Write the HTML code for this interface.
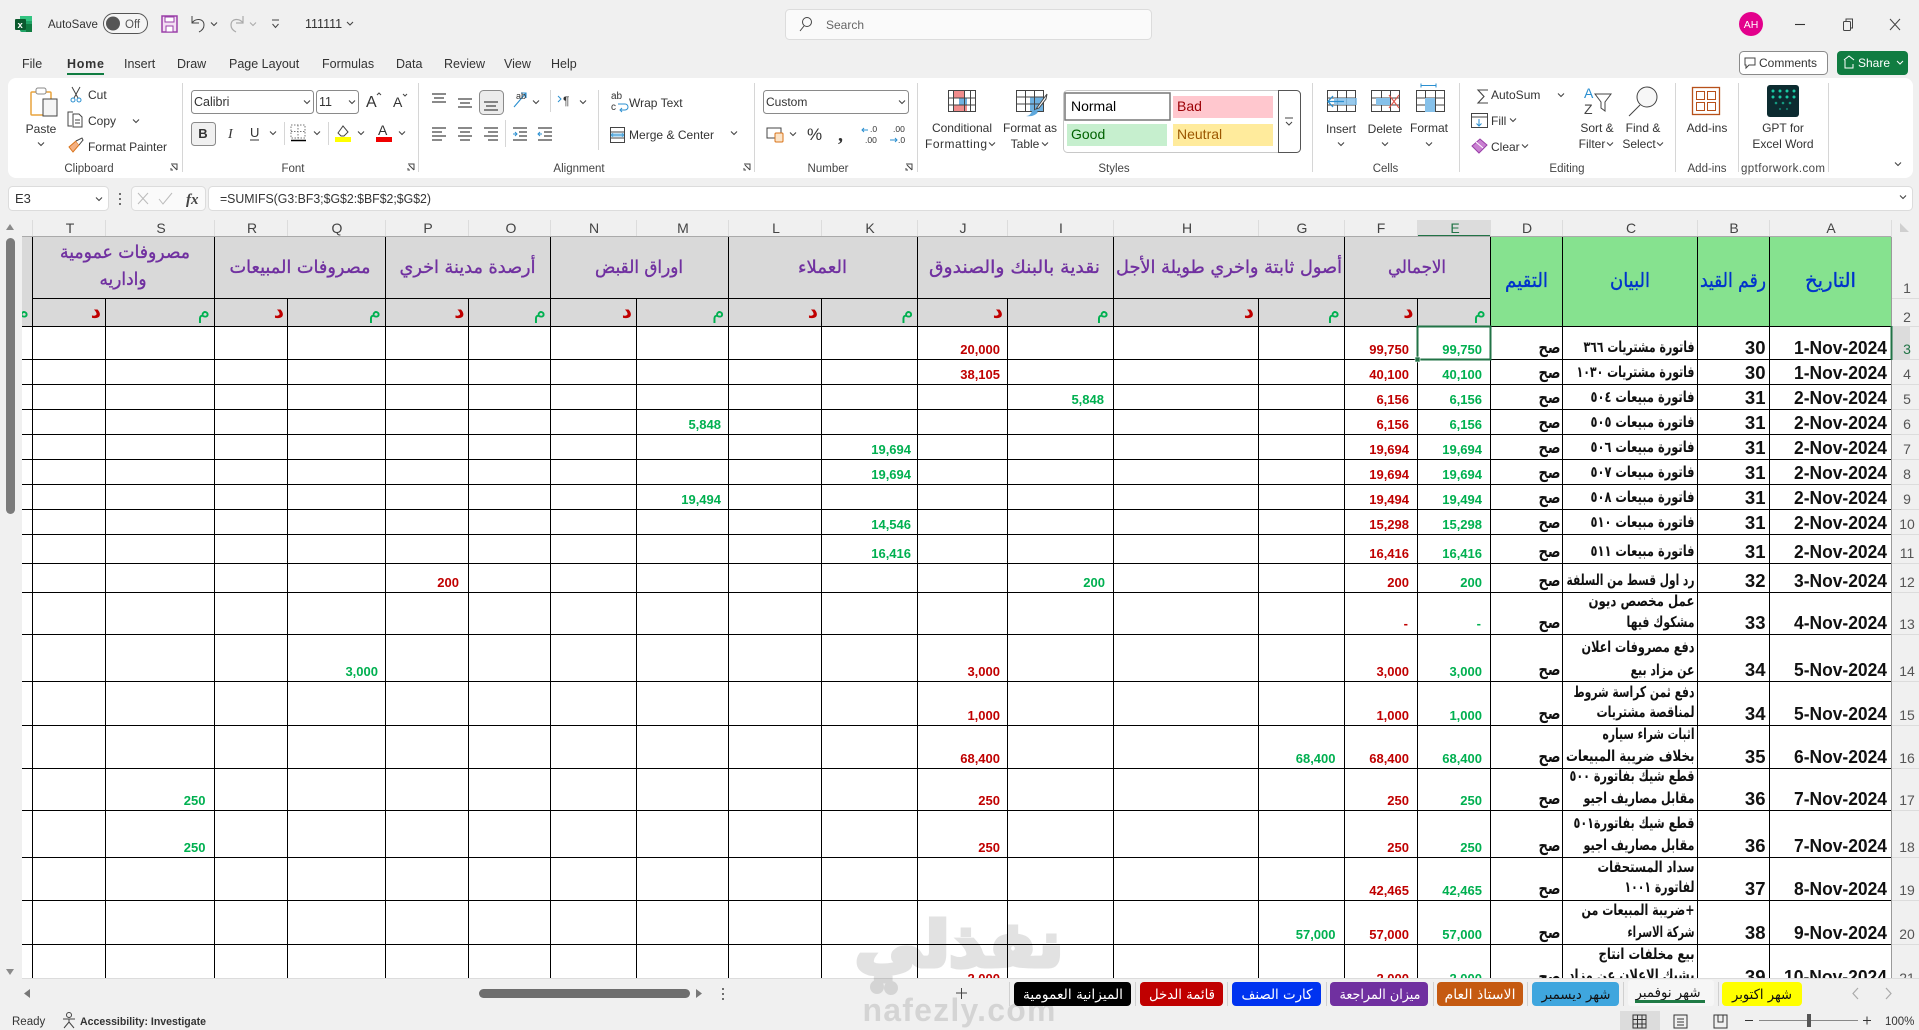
<!DOCTYPE html>
<html><head><meta charset="utf-8"><title>111111 - Excel</title>
<style>
html,body{margin:0;padding:0;background:#f0f0f0;overflow:hidden;width:1919px;height:1030px}
svg{display:block;position:absolute;left:0;top:0}
text{font-family:"Liberation Sans",sans-serif;font-size:12px;fill:#333}
.m{text-anchor:middle}
.tb{font-size:12px;fill:#333}
.g{font-size:11.5px;fill:#444;text-anchor:middle}
.ch{font-size:14px;fill:#444;text-anchor:middle}
.rh{font-size:14px;fill:#555;text-anchor:middle}
.r{font-size:13px;font-weight:bold;fill:#c00000;text-anchor:end}
.e{font-size:13px;font-weight:bold;fill:#00b050;text-anchor:end}
.d{font-size:18.5px;font-weight:bold;fill:#111;text-anchor:end}
.c{font-family:"DejaVu Sans",sans-serif;font-size:15px;font-weight:bold;fill:#111;direction:rtl;text-anchor:start}
.h{font-family:"DejaVu Sans",sans-serif;font-size:18px;fill:#7030a0;stroke:#7030a0;stroke-width:.35;text-anchor:middle}
.b{font-family:"DejaVu Sans",sans-serif;font-size:20px;fill:#0033cc;stroke:#0033cc;stroke-width:.35;text-anchor:middle}
.sm{font-family:"DejaVu Sans",sans-serif;font-size:20px;fill:#00b050;direction:rtl;text-anchor:start}
.sd{font-family:"DejaVu Sans",sans-serif;font-size:20px;fill:#c00000;font-weight:bold;direction:rtl;text-anchor:start}
.tab{font-family:"DejaVu Sans",sans-serif;font-size:14px;fill:#fff;text-anchor:middle}
.ic{fill:none;stroke:#444;stroke-width:1}
.cv{fill:none;stroke:#444;stroke-width:1.1}
</style></head>
<body>
<svg width="1919" height="1030" viewBox="0 0 1919 1030" xmlns="http://www.w3.org/2000/svg">
<defs>
<path id="cv" class="cv" d="M-3 -1.5L0 1.5L3 -1.5"/>
<clipPath id="sheet"><rect x="22" y="237" width="1897" height="741"/></clipPath>
</defs>
<rect width="1919" height="1030" fill="#f0f0f0"/>

<!-- title bar -->
<rect x="20" y="16" width="12" height="16" rx="2" fill="#21a366"/>
<rect x="20" y="16" width="12" height="5" fill="#33c481"/>
<rect x="26" y="24" width="6" height="8" fill="#107c41"/>
<rect x="15" y="19" width="11" height="11" rx="1" fill="#0b5a2e"/>
<text x="17.5" y="28" style="font-size:9.5px;font-weight:bold;fill:#fff">x</text>
<text x="48" y="28" style="font-size:11.5px">AutoSave</text>
<rect x="103.500" y="13.500" width="44" height="20" rx="10" fill="#f5f5f5" stroke="#555"/>
<circle cx="113" cy="23.500" r="7" fill="#555"/>
<text x="125" y="28" style="font-size:11.500px;fill:#555">Off</text>
<rect x="162" y="16" width="15" height="16" fill="#f3dff3" stroke="#9a3fa8" stroke-width="1.500"/>
<rect x="165" y="17" width="9" height="5" fill="#fff" stroke="#9a3fa8"/>
<rect x="166" y="26" width="7" height="6" fill="#fff" stroke="#9a3fa8"/>
<path d="M192 16v7h7M192 23c3-5 12-5 12 2 0 4-3 6-5 7" class="ic" stroke-width="1.200"/>
<use href="#cv" x="214" y="24"/>
<path d="M243 16v7h-7M243 23c-3-5-12-5-12 2 0 4 3 6 5 7" fill="none" stroke="#aaa" stroke-width="1.200"/>
<path d="M250 22.500l3 3 3-3" fill="none" stroke="#aaa"/>
<path d="M272 20h7M272.500 24l3 3.500 3-3.500" class="ic"/>
<text x="305" y="28" style="font-size:12.500px">111111</text>
<use href="#cv" x="350" y="23.500"/>
<rect x="785.500" y="9.500" width="366" height="30" rx="4" fill="#fafafa" stroke="#dcdcdc"/>
<circle cx="807" cy="22" r="4.500" class="ic"/><path d="M804 26l-4 5" class="ic"/>
<text x="826" y="29" style="font-size:12px;fill:#666">Search</text>
<circle cx="1751" cy="24" r="12" fill="#e3008c"/>
<text x="1751" y="28" class="m" style="font-size:10.500px;fill:#fff">AH</text>
<path d="M1795 24.500h10" stroke="#333" stroke-width="1.100"/>
<rect x="1843.500" y="21.500" width="7" height="9" rx="1" class="ic"/><path d="M1846 21v-2h6.500v9h-2" class="ic"/>
<path d="M1890 19l10 11M1900 19l-10 11" class="ic" stroke-width="1.100"/>

<!-- menu -->
<g>
<text x="22" y="68" style="font-size:12.500px">File</text>
<text x="67" y="68" style="font-weight:bold;fill:#333;font-size:12.500px" textLength="37">Home</text>
<text x="124" y="68" style="font-size:12.500px">Insert</text>
<text x="177" y="68" style="font-size:12.500px">Draw</text>
<text x="229" y="68" style="font-size:12.500px">Page Layout</text>
<text x="322" y="68" style="font-size:12.500px">Formulas</text>
<text x="396" y="68" style="font-size:12.500px">Data</text>
<text x="444" y="68" style="font-size:12.500px">Review</text>
<text x="504" y="68" style="font-size:12.500px">View</text>
<text x="551" y="68" style="font-size:12.500px">Help</text>
</g>
<rect x="67" y="73" width="37" height="2" fill="#107c41"/>
<rect x="1739.500" y="51.500" width="88" height="23" rx="4" fill="#fff" stroke="#8a8a8a"/>
<path d="M1745 58h10v7h-6l-3 3v-3h-1z" class="ic"/>
<text x="1759" y="67" style="font-size:12px">Comments</text>
<rect x="1837" y="51" width="71" height="24" rx="4" fill="#107c41"/>
<path d="M1844 60l5-4 5 4M1845 60v8h8v-4" fill="none" stroke="#fff"/>
<text x="1858" y="67" style="font-size:12px;fill:#fff">Share</text>
<path d="M1897 61l3 3 3-3" fill="none" stroke="#fff"/>

<!-- ribbon -->
<rect x="8" y="78" width="1905" height="100" rx="8" fill="#fff"/>
<g stroke="#d6d6d6">
<path d="M182.500 83v89M418.500 83v89M754.500 83v89M917.500 83v89M1312.500 83v89M1459.500 83v89M1675.500 83v89M1738.500 83v89M1828.500 83v89M284.500 122v23M328.500 122v23M505.500 120v27M550.500 90v22M598.500 90v60"/>
</g>
<text x="89" y="172" class="g">Clipboard</text>
<text x="293" y="172" class="g">Font</text>
<text x="579" y="172" class="g">Alignment</text>
<text x="828" y="172" class="g">Number</text>
<text x="1114" y="172" class="g">Styles</text>
<text x="1385.500" y="172" class="g">Cells</text>
<text x="1567" y="172" class="g">Editing</text>
<text x="1707" y="172" class="g">Add-ins</text>
<text x="1783" y="172" class="g" textLength="84">gptforwork.com</text>
<path d="M171 164h6v6M177 170l-5-5M171 168v2h2" class="ic" stroke-width=".8"/>
<path d="M408 164h6v6M414 170l-5-5M408 168v2h2" class="ic" stroke-width=".8"/>
<path d="M744 164h6v6M750 170l-5-5M744 168v2h2" class="ic" stroke-width=".8"/>
<path d="M906 164h6v6M912 170l-5-5M906 168v2h2" class="ic" stroke-width=".8"/>
<use href="#cv" x="1898" y="164"/>

<!-- clipboard -->
<rect x="31" y="92" width="20" height="23" rx="1" fill="#fff" stroke="#e8a33d" stroke-width="1.500"/>
<rect x="36" y="88" width="10" height="6" rx="2" fill="#fff" stroke="#888"/>
<rect x="43" y="99" width="14" height="17" fill="#f5f5f5" stroke="#444"/>
<text x="41" y="133" class="tb m">Paste</text>
<use href="#cv" x="41" y="144"/>
<path d="M72 87l6 11M80 87l-6 11" class="ic"/>
<circle cx="73" cy="100" r="2" fill="none" stroke="#2a8fd0"/><circle cx="79" cy="100" r="2" fill="none" stroke="#2a8fd0"/>
<text x="88" y="99" class="tb">Cut</text>
<path d="M72 126h-4v-14h5M73 114h6l3 3v10h-9z" class="ic"/>
<path d="M75 120h5M75 123h5" class="ic" stroke-width=".8"/>
<text x="88" y="125" class="tb">Copy</text>
<use href="#cv" x="136" y="121"/>
<path d="M69 147l7-6 3 4-6 7z" fill="#f4b183" stroke="#d9731a"/>
<path d="M76 141l6-3 1 2-4 5" fill="#fff" stroke="#444"/>
<text x="88" y="151" class="tb" textLength="79">Format Painter</text>

<!-- font -->
<rect x="191.500" y="90.500" width="122" height="23" rx="3" fill="#fff" stroke="#8a8a8a"/>
<text x="194" y="106" class="tb" style="font-size:12.500px">Calibri</text>
<use href="#cv" x="307" y="102"/>
<rect x="316.500" y="90.500" width="42" height="23" rx="3" fill="#fff" stroke="#8a8a8a"/>
<text x="319" y="106" class="tb" style="font-size:12.500px">11</text>
<use href="#cv" x="352" y="102"/>
<text x="366" y="107" style="font-size:16px">A</text><path d="M377 95l2-2 2 2" class="ic" stroke-width=".8"/>
<text x="393" y="107" style="font-size:14px">A</text><path d="M403 94l2 2 2-2" class="ic" stroke-width=".8"/>
<rect x="191.500" y="122.500" width="24" height="23" rx="3" fill="#f0f0f0" stroke="#8a8a8a"/>
<text x="203" y="138" class="m" style="font-size:13px;font-weight:bold">B</text>
<text x="228" y="138" style="font-family:'Liberation Serif',serif;font-style:italic;font-size:14px">I</text>
<text x="250" y="137" style="font-size:13px">U</text><path d="M250 140h9" stroke="#333"/>
<use href="#cv" x="273" y="133"/>
<rect x="291" y="125" width="14" height="13" fill="none" stroke="#777" stroke-dasharray="1.500 1.500"/><path d="M298 125v13M291 131.500h14" stroke="#777" stroke-dasharray="1.500 1.500"/>
<path d="M291 140.500h15" stroke="#000" stroke-width="1.500"/>
<use href="#cv" x="317" y="133"/>
<path d="M338 133l5-7 5 6-4 4h-3z" fill="#fff" stroke="#444"/>
<rect x="335" y="137" width="16" height="5" fill="#ffff00"/>
<use href="#cv" x="361" y="133"/>
<text x="378" y="135" style="font-size:14px">A</text>
<rect x="376" y="137" width="16" height="5" fill="#f00000"/>
<use href="#cv" x="402" y="133"/>

<!-- align -->
<g fill="none" stroke="#444" stroke-width="1.200">
<path d="M432 94h14M434 98h10M432 102h14"/>
<path d="M458 99h14M460 103h10M458 107h14"/>
<rect x="479.500" y="90.500" width="24" height="24" rx="4" fill="#ececec" stroke="#8a8a8a" stroke-width="1"/>
<path d="M484 102h14M486 106h10M484 110h14"/>
<path d="M432 128h14M432 132h10M432 136h14M432 140h10"/>
<path d="M458 128h14M460 132h10M458 136h14M460 140h10"/>
<path d="M484 128h14M488 132h10M484 136h14M488 140h10"/>
<path d="M513 128h14M519 132h8M519 136h8M513 140h14"/>
<path d="M538 128h14M544 132h8M544 136h8M538 140h14"/>
</g>
<path d="M513 134h4M515 132l2 2-2 2" fill="none" stroke="#2a8fd0"/>
<path d="M542 134h-4M540 132l-2 2 2 2" fill="none" stroke="#2a8fd0"/>
<path d="M514 107l12-14M521 93h5v5" fill="none" stroke="#2a8fd0" stroke-width="1.100"/>
<text x="516" y="99" style="font-size:9px">ab</text>
<use href="#cv" x="536" y="102"/>
<path d="M558 96l3 3-3 3" fill="none" stroke="#2a8fd0"/>
<text x="563" y="105" style="font-size:12px">¶</text>
<use href="#cv" x="583" y="102"/>
<text x="611" y="99" style="font-size:10px">ab</text>
<text x="611" y="110" style="font-size:10px">c</text>
<path d="M618 104h7a3 3 0 0 1 0 6h-4M622 108l-2 2 2 2" fill="none" stroke="#2a8fd0"/>
<text x="629" y="107" class="tb">Wrap Text</text>
<rect x="610.500" y="127.500" width="14" height="15" fill="#fff" stroke="#444"/>
<path d="M610 132h15M610 138h15" stroke="#444"/>
<rect x="611" y="133" width="13" height="4" fill="#bde0f5"/>
<path d="M613 135h9M613 133.500l-1.500 1.500 1.500 1.500M622 133.500l1.500 1.500-1.500 1.500" fill="none" stroke="#2a8fd0"/>
<text x="629" y="139" class="tb" textLength="85">Merge &amp; Center</text>
<use href="#cv" x="734" y="133"/>

<!-- number -->
<rect x="763.500" y="90.500" width="145" height="23" rx="3" fill="#fff" stroke="#8a8a8a"/>
<text x="766" y="106" class="tb">Custom</text>
<use href="#cv" x="902" y="102"/>
<rect x="767" y="128" width="14" height="10" fill="#fff" stroke="#444"/>
<rect x="775" y="133" width="8" height="9" rx="1" fill="#fce4c8" stroke="#d9731a"/>
<use href="#cv" x="793" y="134"/>
<text x="807" y="140" style="font-size:17px">%</text>
<text x="838" y="141" style="font-size:20px;font-weight:bold;font-family:'Liberation Serif',serif">,</text>
<text x="870" y="132" style="font-size:8.500px">.0</text>
<path d="M868 130h-6m2-2l-2 2 2 2" fill="none" stroke="#2a8fd0"/>
<text x="865" y="143" style="font-size:8.500px">.00</text>
<text x="893" y="132" style="font-size:8.500px">.00</text>
<path d="M890 140h7m-2-2l2 2-2 2" fill="none" stroke="#2a8fd0"/>
<text x="898" y="143" style="font-size:8.500px">.0</text>

<!-- cond formatting -->
<rect x="953" y="91" width="11" height="7" fill="#f08c8c"/>
<rect x="959" y="98" width="8" height="7" fill="#6fb1e0"/>
<rect x="953" y="105" width="14" height="7" fill="#f08c8c"/>
<g fill="none" stroke="#444" stroke-width="1">
<rect x="948.500" y="90.500" width="27" height="21"/>
<path d="M948 98h28M948 105h28M953.500 90v22M964.500 90v22M970.500 90v22"/>
</g>
<text x="962" y="132" class="tb m">Conditional</text>
<text x="956" y="148" class="tb m" textLength="62">Formatting</text>
<use href="#cv" x="992" y="144"/>
<rect x="1030" y="97" width="14" height="15" fill="#6fb1e0"/>
<g fill="none" stroke="#444" stroke-width="1">
<rect x="1016.500" y="90.500" width="27" height="21"/>
<path d="M1016 97h28M1016 104h28M1025.500 90v22M1034.500 90v22"/>
</g>
<path d="M1036 109l8-11 3-4-1 5-7 9z" fill="#fff" stroke="#444"/>
<path d="M1026 116c3 0 5-2 6-5 2-2 5 0 6 1-2 3-6 5-12 4z" fill="#5ea8dc"/>
<text x="1030" y="132" class="tb m">Format as</text>
<text x="1025" y="148" class="tb m">Table</text>
<use href="#cv" x="1045" y="144"/>

<!-- styles -->
<rect x="1063.500" y="90.500" width="237" height="62" rx="4" fill="#fff" stroke="#c8c8c8"/>
<rect x="1065" y="93" width="105" height="27" fill="#fff" stroke="#777" stroke-width="1.500"/>
<text x="1071" y="111" style="font-size:14px;fill:#000">Normal</text>
<rect x="1173" y="96" width="100" height="22" fill="#ffc7ce"/>
<text x="1177" y="111" style="font-size:14px;fill:#9c0006">Bad</text>
<rect x="1067" y="124" width="100" height="22" fill="#c6efce"/>
<text x="1071" y="139" style="font-size:14px;fill:#006100">Good</text>
<rect x="1173" y="124" width="100" height="22" fill="#ffeb9c"/>
<text x="1177" y="139" style="font-size:14px;fill:#9c5700">Neutral</text>
<path d="M1278.500 90.500h18a4 4 0 0 1 4 4v54a4 4 0 0 1-4 4h-18z" fill="#fff" stroke="#555"/>
<path d="M1285 118h8M1286 122l3 3 3-3" class="ic"/>

<!-- cells -->
<g fill="none" stroke="#444">
<rect x="1327.500" y="90.500" width="28" height="21"/>
<path d="M1327 98h29M1327 105h29M1337.500 90v22M1346.500 90v22"/>
<rect x="1371.500" y="90.500" width="28" height="21"/>
<path d="M1371 98h29M1371 105h29M1381.500 90v22M1390.500 90v22"/>
<rect x="1416.500" y="90.500" width="28" height="21"/>
<path d="M1416 98h29M1416 105h29M1425.500 90v22M1435.500 90v22"/>
</g>
<rect x="1334" y="98" width="23" height="7" fill="#86c1ea" opacity=".85"/>
<path d="M1344 101.500h-16M1333 96l-5 5.500 5 5.500" fill="none" stroke="#2a8fd0" stroke-width="1.300"/>
<rect x="1376" y="98" width="14" height="7" fill="#86c1ea"/>
<path d="M1389 95l10 13M1399 95l-10 13" fill="none" stroke="#e0564a" stroke-width="1.100"/>
<rect x="1425" y="98" width="10" height="14" fill="#86c1ea"/>
<path d="M1421 85.500h15M1421 83.500v4M1436 83.500v4" fill="none" stroke="#2a8fd0"/>
<text x="1341" y="133" class="tb m">Insert</text>
<use href="#cv" x="1341" y="144"/>
<text x="1385" y="133" class="tb m">Delete</text>
<use href="#cv" x="1385" y="144"/>
<text x="1429" y="132" class="tb m">Format</text>
<use href="#cv" x="1429" y="144"/>

<!-- editing -->
<path d="M1488 90h-10l6 6.500-6 6.500h10" fill="none" stroke="#444" stroke-width="1.100"/>
<text x="1491" y="99" class="tb">AutoSum</text>
<use href="#cv" x="1561" y="95"/>
<rect x="1471.500" y="113.500" width="16" height="14" fill="#fff" stroke="#444"/><path d="M1471 117h17" stroke="#444"/>
<path d="M1479 119v7M1476.500 123.500l2.500 2.500 2.500-2.500" fill="none" stroke="#2a8fd0"/>
<text x="1491" y="125" class="tb">Fill</text>
<use href="#cv" x="1513" y="120"/>
<path d="M1472 146l8-7 7 6-8 8z" fill="#c97fd1" stroke="#9a3fa8"/><path d="M1476 142l7 6" stroke="#fff"/>
<text x="1491" y="151" class="tb">Clear</text>
<use href="#cv" x="1525" y="146"/>
<text x="1584" y="98" style="font-size:14px;fill:#2a8fd0">A</text>
<text x="1584" y="114" style="font-size:14px;fill:#444">Z</text>
<path d="M1595 94h16l-6 8v9l-4-3v-6z" class="ic"/>
<text x="1597" y="132" class="tb m">Sort &amp;</text>
<text x="1592" y="148" class="tb m">Filter</text>
<use href="#cv" x="1610" y="144"/>
<circle cx="1647" cy="97" r="10" fill="#f7f7f7" stroke="#444"/><path d="M1640 105l-11 11" class="ic"/>
<text x="1643" y="132" class="tb m">Find &amp;</text>
<text x="1639" y="148" class="tb m">Select</text>
<use href="#cv" x="1660" y="144"/>

<!-- add-ins -->
<rect x="1692.500" y="87.500" width="27" height="27" fill="#fff" stroke="#b7501a" stroke-width="1.300"/>
<rect x="1696.500" y="91.500" width="8" height="8" fill="none" stroke="#b7501a"/>
<rect x="1707.500" y="91.500" width="8" height="8" fill="none" stroke="#b7501a"/>
<rect x="1696.500" y="102.500" width="8" height="8" fill="none" stroke="#b7501a"/>
<rect x="1707.500" y="102.500" width="8" height="8" fill="none" stroke="#b7501a"/>
<text x="1707" y="132" class="tb m">Add-ins</text>
<rect x="1767" y="85" width="32" height="32" rx="3" fill="#0c2b30"/>
<g fill="#19c9a3">
<circle cx="1773" cy="91" r="1.500"/><circle cx="1780" cy="91" r="1.500"/><circle cx="1787" cy="91" r="1.500"/><circle cx="1794" cy="91" r="1.500"/>
<circle cx="1773" cy="97" r="1.500"/><circle cx="1780" cy="97" r="1.500"/><circle cx="1787" cy="97" r="1.500"/><circle cx="1794" cy="97" r="1.500"/>
<circle cx="1776" cy="103" r="1.300" opacity=".7"/><circle cx="1783" cy="103" r="1.300" opacity=".7"/><circle cx="1790" cy="103" r="1.300" opacity=".7"/>
<circle cx="1780" cy="109" r="1.100" opacity=".5"/><circle cx="1787" cy="109" r="1.100" opacity=".5"/>
</g>
<text x="1783" y="132" class="tb m">GPT for</text>
<text x="1783" y="148" class="tb m">Excel Word</text>

<!-- formula bar -->
<rect x="8.500" y="186.500" width="100" height="24" rx="4" fill="#fff" stroke="#dcdcdc"/>
<text x="15" y="203" style="font-size:13px">E3</text>
<use href="#cv" x="99" y="199"/>
<circle cx="120" cy="194" r="1" fill="#444"/><circle cx="120" cy="199" r="1" fill="#444"/><circle cx="120" cy="204" r="1" fill="#444"/>
<rect x="131.500" y="186.500" width="74" height="24" rx="4" fill="#fafafa" stroke="#dcdcdc"/>
<path d="M138 193l10 11M148 193l-10 11" stroke="#bbb" fill="none"/>
<path d="M159 199l4 5 9-11" stroke="#bbb" fill="none"/>
<text x="186" y="204" style="font-family:'Liberation Serif',serif;font-style:italic;font-weight:bold;font-size:15px;fill:#444">fx</text>
<rect x="208.500" y="186.500" width="1704" height="24" rx="4" fill="#fff" stroke="#dcdcdc"/>
<text x="220" y="203" textLength="211" lengthAdjust="spacingAndGlyphs" style="font-size:12.500px">=SUMIFS(G3:BF3;$G$2:$BF$2;$G$2)</text>
<use href="#cv" x="1903" y="197"/>

<!-- left scrollbar -->
<rect x="0" y="220" width="22" height="760" fill="#f0f0f0"/>
<path d="M6 230l4-6 4 6z" fill="#8a8a8a"/>
<rect x="6" y="238" width="9" height="276" rx="4.500" fill="#7b7b7b"/>
<path d="M6 969l4 6 4-6z" fill="#8a8a8a"/>

<!-- column headers -->
<rect x="22" y="220" width="1897" height="17" fill="#f0f0f0"/>
<rect x="1417" y="220" width="73.500" height="17" fill="#dcdcdc"/>
<rect x="1417" y="235" width="74" height="2" fill="#217346"/>
<path d="M1900 232v-9l9 9z" fill="#cfcfcf"/>
<path d="M32.500 220v17M105.500 220v17M214.500 220v17M287.500 220v17M385.500 220v17M468.500 220v17M550.500 220v17M636.500 220v17M728.500 220v17M821.500 220v17M917.500 220v17M1007.500 220v17M1113.500 220v17M1258.500 220v17M1344.500 220v17M1417.500 220v17M1490.500 220v17M1562.500 220v17M1697.500 220v17M1769.500 220v17M1891.500 220v17" stroke="#dcdcdc"/>
<path d="M22 236.500H1891" stroke="#aaa"/>
<g>
<text x="70" y="233" class="ch">T</text><text x="161" y="233" class="ch">S</text><text x="252" y="233" class="ch">R</text><text x="337" y="233" class="ch">Q</text><text x="428" y="233" class="ch">P</text><text x="511" y="233" class="ch">O</text><text x="594" y="233" class="ch">N</text><text x="683" y="233" class="ch">M</text><text x="776" y="233" class="ch">L</text><text x="870" y="233" class="ch">K</text><text x="963" y="233" class="ch">J</text><text x="1061" y="233" class="ch">I</text><text x="1187" y="233" class="ch">H</text><text x="1302" y="233" class="ch">G</text><text x="1381" y="233" class="ch">F</text><text x="1455" y="233" class="ch" style="fill:#217346">E</text><text x="1527" y="233" class="ch">D</text><text x="1631" y="233" class="ch">C</text><text x="1734" y="233" class="ch">B</text><text x="1831" y="233" class="ch">A</text>
</g>

<!-- sheet body -->
<rect x="22" y="237" width="1869" height="741" fill="#fff"/>
<rect x="22" y="237" width="1468.500" height="89" fill="#d9d9d9"/>
<rect x="1490.500" y="237" width="400.500" height="89" fill="#86e28f"/>
<rect x="1892" y="237" width="27" height="741" fill="#f0f0f0"/>
<rect x="1892" y="326" width="18" height="33" fill="#dcdcdc"/>
<g clip-path="url(#sheet)">
<path d="M1892 298.500h27M1892 326.500h27M1892 359.500h27M1892 384.500h27M1892 409.500h27M1892 434.500h27M1892 459.500h27M1892 484.500h27M1892 509.500h27M1892 534.500h27M1892 563.500h27M1892 592.500h27M1892 634.500h27M1892 681.500h27M1892 725.500h27M1892 768.500h27M1892 810.500h27M1892 857.500h27M1892 900.500h27M1892 944.500h27" stroke="#dcdcdc"/>
<path d="M1891.500 237V978" stroke="#9a9a9a"/>
<g stroke="#000" stroke-width="1" fill="none">
<path d="M32 298.500H1490"/>
<path d="M22 326.500H1891M22 359.500H1891M22 384.500H1891M22 409.500H1891M22 434.500H1891M22 459.500H1891M22 484.500H1891M22 509.500H1891M22 534.500H1891M22 563.500H1891M22 592.500H1891M22 634.500H1891M22 681.500H1891M22 725.500H1891M22 768.500H1891M22 810.500H1891M22 857.500H1891M22 900.500H1891M22 944.500H1891"/>
<path d="M32.500 237V978M214.500 237V978M385.500 237V978M550.500 237V978M728.500 237V978M917.500 237V978M1113.500 237V978M1344.500 237V978M1490.500 237V978M1562.500 237V978M1697.500 237V978M1769.500 237V978"/>
<path d="M105.500 298V978M287.500 298V978M468.500 298V978M636.500 298V978M821.500 298V978M1007.500 298V978M1258.500 298V978M1417.500 298V978"/>
</g>
<!-- group headers -->
<text x="125" y="258" class="h" textLength="130" lengthAdjust="spacingAndGlyphs">مصروفات عمومية</text>
<text x="123" y="285" class="h" textLength="47" lengthAdjust="spacingAndGlyphs">واداريه</text>
<text x="300" y="273" class="h" textLength="141" lengthAdjust="spacingAndGlyphs">مصروفات المبيعات</text>
<text x="467.500" y="273" class="h" textLength="136" lengthAdjust="spacingAndGlyphs">أرصدة مدينة اخري</text>
<text x="639" y="273" class="h" textLength="88" lengthAdjust="spacingAndGlyphs">اوراق القبض</text>
<text x="822.500" y="273" class="h" textLength="49" lengthAdjust="spacingAndGlyphs">العملاء</text>
<text x="1014.500" y="273" class="h" textLength="171" lengthAdjust="spacingAndGlyphs">نقدية بالبنك والصندوق</text>
<text x="1229" y="273" class="h" textLength="226" lengthAdjust="spacingAndGlyphs">أصول ثابتة واخري طويلة الأجل</text>
<text x="1417" y="273" class="h" textLength="58" lengthAdjust="spacingAndGlyphs">الاجمالي</text>
<text x="1830.500" y="287" class="b" textLength="51" lengthAdjust="spacingAndGlyphs">التاريخ</text>
<text x="1733" y="287" class="b" textLength="66" lengthAdjust="spacingAndGlyphs">رقم القيد</text>
<text x="1630" y="287" class="b" textLength="40" lengthAdjust="spacingAndGlyphs">البيان</text>
<text x="1526.500" y="287" class="b" textLength="43" lengthAdjust="spacingAndGlyphs">التقيم</text>
<!-- row 2 labels -->
<text x="29" y="318" class="sm">م</text><text x="101" y="318" class="sd">د</text><text x="210" y="318" class="sm">م</text><text x="284" y="318" class="sd">د</text><text x="381" y="318" class="sm">م</text><text x="464.500" y="318" class="sd">د</text><text x="546" y="318" class="sm">م</text><text x="632" y="318" class="sd">د</text><text x="724.500" y="318" class="sm">م</text><text x="818" y="318" class="sd">د</text><text x="913.500" y="318" class="sm">م</text><text x="1003" y="318" class="sd">د</text><text x="1109" y="318" class="sm">م</text><text x="1254" y="318" class="sd">د</text><text x="1340" y="318" class="sm">م</text><text x="1413.500" y="318" class="sd">د</text><text x="1486" y="318" class="sm">م</text>

<!-- Dates -->
<text x="1887" y="354" class="d" textLength="93" lengthAdjust="spacingAndGlyphs">1-Nov-2024</text><text x="1765.500" y="354" class="d">30</text>
<text x="1887" y="379" class="d" textLength="93" lengthAdjust="spacingAndGlyphs">1-Nov-2024</text><text x="1765.500" y="379" class="d">30</text>
<text x="1887" y="404" class="d" textLength="93" lengthAdjust="spacingAndGlyphs">2-Nov-2024</text><text x="1765.500" y="404" class="d">31</text>
<text x="1887" y="429" class="d" textLength="93" lengthAdjust="spacingAndGlyphs">2-Nov-2024</text><text x="1765.500" y="429" class="d">31</text>
<text x="1887" y="454" class="d" textLength="93" lengthAdjust="spacingAndGlyphs">2-Nov-2024</text><text x="1765.500" y="454" class="d">31</text>
<text x="1887" y="479" class="d" textLength="93" lengthAdjust="spacingAndGlyphs">2-Nov-2024</text><text x="1765.500" y="479" class="d">31</text>
<text x="1887" y="504" class="d" textLength="93" lengthAdjust="spacingAndGlyphs">2-Nov-2024</text><text x="1765.500" y="504" class="d">31</text>
<text x="1887" y="529" class="d" textLength="93" lengthAdjust="spacingAndGlyphs">2-Nov-2024</text><text x="1765.500" y="529" class="d">31</text>
<text x="1887" y="558" class="d" textLength="93" lengthAdjust="spacingAndGlyphs">2-Nov-2024</text><text x="1765.500" y="558" class="d">31</text>
<text x="1887" y="587" class="d" textLength="93" lengthAdjust="spacingAndGlyphs">3-Nov-2024</text><text x="1765.500" y="587" class="d">32</text>
<text x="1887" y="629" class="d" textLength="93" lengthAdjust="spacingAndGlyphs">4-Nov-2024</text><text x="1765.500" y="629" class="d">33</text>
<text x="1887" y="676" class="d" textLength="93" lengthAdjust="spacingAndGlyphs">5-Nov-2024</text><text x="1765.500" y="676" class="d">34</text>
<text x="1887" y="720" class="d" textLength="93" lengthAdjust="spacingAndGlyphs">5-Nov-2024</text><text x="1765.500" y="720" class="d">34</text>
<text x="1887" y="763" class="d" textLength="93" lengthAdjust="spacingAndGlyphs">6-Nov-2024</text><text x="1765.500" y="763" class="d">35</text>
<text x="1887" y="805" class="d" textLength="93" lengthAdjust="spacingAndGlyphs">7-Nov-2024</text><text x="1765.500" y="805" class="d">36</text>
<text x="1887" y="852" class="d" textLength="93" lengthAdjust="spacingAndGlyphs">7-Nov-2024</text><text x="1765.500" y="852" class="d">36</text>
<text x="1887" y="895" class="d" textLength="93" lengthAdjust="spacingAndGlyphs">8-Nov-2024</text><text x="1765.500" y="895" class="d">37</text>
<text x="1887" y="939" class="d" textLength="93" lengthAdjust="spacingAndGlyphs">9-Nov-2024</text><text x="1765.500" y="939" class="d">38</text>
<text x="1887" y="983" class="d" textLength="103" lengthAdjust="spacingAndGlyphs">10-Nov-2024</text><text x="1765.500" y="983" class="d">39</text>

<!-- Description -->
<text x="1694.500" y="352" class="c" textLength="111" lengthAdjust="spacingAndGlyphs">فاتورة مشتريات ٣٦٦</text>
<text x="1694.500" y="377" class="c" textLength="118" lengthAdjust="spacingAndGlyphs">فاتورة مشتريات ١٠٣٠</text>
<text x="1694.500" y="402" class="c" textLength="104" lengthAdjust="spacingAndGlyphs">فاتورة مبيعات ٥٠٤</text>
<text x="1694.500" y="427" class="c" textLength="104" lengthAdjust="spacingAndGlyphs">فاتورة مبيعات ٥٠٥</text>
<text x="1694.500" y="452" class="c" textLength="104" lengthAdjust="spacingAndGlyphs">فاتورة مبيعات ٥٠٦</text>
<text x="1694.500" y="477" class="c" textLength="104" lengthAdjust="spacingAndGlyphs">فاتورة مبيعات ٥٠٧</text>
<text x="1694.500" y="502" class="c" textLength="104" lengthAdjust="spacingAndGlyphs">فاتورة مبيعات ٥٠٨</text>
<text x="1694.500" y="527" class="c" textLength="104" lengthAdjust="spacingAndGlyphs">فاتورة مبيعات ٥١٠</text>
<text x="1694.500" y="556" class="c" textLength="104" lengthAdjust="spacingAndGlyphs">فاتورة مبيعات ٥١١</text>
<text x="1694.500" y="585" class="c" textLength="128" lengthAdjust="spacingAndGlyphs">رد اول قسط من السلفة</text>
<text x="1694.500" y="606" class="c" textLength="106" lengthAdjust="spacingAndGlyphs">عمل مخصص ديون</text>
<text x="1694.500" y="627" class="c" textLength="68" lengthAdjust="spacingAndGlyphs">مشكوك فيها</text>
<text x="1694.500" y="652" class="c" textLength="113" lengthAdjust="spacingAndGlyphs">دفع مصروفات اعلان</text>
<text x="1694.500" y="675" class="c" textLength="64" lengthAdjust="spacingAndGlyphs">عن مزاد بيع</text>
<text x="1694.500" y="697" class="c" textLength="121" lengthAdjust="spacingAndGlyphs">دفع ثمن كراسة شروط</text>
<text x="1694.500" y="717" class="c" textLength="98" lengthAdjust="spacingAndGlyphs">لمناقصة مشتريات</text>
<text x="1694.500" y="739" class="c" textLength="92" lengthAdjust="spacingAndGlyphs">اثبات شراء سياره</text>
<text x="1694.500" y="761" class="c" textLength="128.500" lengthAdjust="spacingAndGlyphs">بخلاف ضريبة المبيعات</text>
<text x="1694.500" y="781" class="c" textLength="125" lengthAdjust="spacingAndGlyphs">قطع شيك بفاتورة ٥٠٠</text>
<text x="1694.500" y="803" class="c" textLength="111" lengthAdjust="spacingAndGlyphs">مقابل مصاريف اجيو</text>
<text x="1694.500" y="828" class="c" textLength="121" lengthAdjust="spacingAndGlyphs">قطع شيك بفاتورة٥٠١</text>
<text x="1694.500" y="850" class="c" textLength="111" lengthAdjust="spacingAndGlyphs">مقابل مصاريف اجيو</text>
<text x="1694.500" y="872" class="c" textLength="97" lengthAdjust="spacingAndGlyphs">سداد المستحقات</text>
<text x="1694.500" y="892" class="c" textLength="70" lengthAdjust="spacingAndGlyphs">لفاتورة ١٠٠١</text>
<text x="1694.500" y="915" class="c" textLength="113" lengthAdjust="spacingAndGlyphs">+ضريبة المبيعات من</text>
<text x="1694.500" y="937" class="c" textLength="67" lengthAdjust="spacingAndGlyphs">شركة الاسراء</text>
<text x="1694.500" y="959" class="c" textLength="96" lengthAdjust="spacingAndGlyphs">بيع مخلفات انتاج</text>
<text x="1694.500" y="980" class="c" textLength="126" lengthAdjust="spacingAndGlyphs">بشيك الاعلان عن مزاد</text>

<!-- D -->
<g style="font-size:17px">
<text x="1560.500" y="353" class="c" style="font-size:17px" textLength="22" lengthAdjust="spacingAndGlyphs">صح</text>
<text x="1560.500" y="378" class="c" style="font-size:17px" textLength="22" lengthAdjust="spacingAndGlyphs">صح</text>
<text x="1560.500" y="403" class="c" style="font-size:17px" textLength="22" lengthAdjust="spacingAndGlyphs">صح</text>
<text x="1560.500" y="428" class="c" style="font-size:17px" textLength="22" lengthAdjust="spacingAndGlyphs">صح</text>
<text x="1560.500" y="453" class="c" style="font-size:17px" textLength="22" lengthAdjust="spacingAndGlyphs">صح</text>
<text x="1560.500" y="478" class="c" style="font-size:17px" textLength="22" lengthAdjust="spacingAndGlyphs">صح</text>
<text x="1560.500" y="503" class="c" style="font-size:17px" textLength="22" lengthAdjust="spacingAndGlyphs">صح</text>
<text x="1560.500" y="528" class="c" style="font-size:17px" textLength="22" lengthAdjust="spacingAndGlyphs">صح</text>
<text x="1560.500" y="557" class="c" style="font-size:17px" textLength="22" lengthAdjust="spacingAndGlyphs">صح</text>
<text x="1560.500" y="586" class="c" style="font-size:17px" textLength="22" lengthAdjust="spacingAndGlyphs">صح</text>
<text x="1560.500" y="628" class="c" style="font-size:17px" textLength="22" lengthAdjust="spacingAndGlyphs">صح</text>
<text x="1560.500" y="675" class="c" style="font-size:17px" textLength="22" lengthAdjust="spacingAndGlyphs">صح</text>
<text x="1560.500" y="719" class="c" style="font-size:17px" textLength="22" lengthAdjust="spacingAndGlyphs">صح</text>
<text x="1560.500" y="762" class="c" style="font-size:17px" textLength="22" lengthAdjust="spacingAndGlyphs">صح</text>
<text x="1560.500" y="804" class="c" style="font-size:17px" textLength="22" lengthAdjust="spacingAndGlyphs">صح</text>
<text x="1560.500" y="851" class="c" style="font-size:17px" textLength="22" lengthAdjust="spacingAndGlyphs">صح</text>
<text x="1560.500" y="894" class="c" style="font-size:17px" textLength="22" lengthAdjust="spacingAndGlyphs">صح</text>
<text x="1560.500" y="938" class="c" style="font-size:17px" textLength="22" lengthAdjust="spacingAndGlyphs">صح</text>
<text x="1560.500" y="982" class="c" style="font-size:17px" textLength="22" lengthAdjust="spacingAndGlyphs">صح</text>
</g>

<!-- E / F -->
<text x="1482" y="354" class="e">99,750</text><text x="1409" y="354" class="r">99,750</text>
<text x="1482" y="379" class="e">40,100</text><text x="1409" y="379" class="r">40,100</text>
<text x="1482" y="404" class="e">6,156</text><text x="1409" y="404" class="r">6,156</text>
<text x="1482" y="429" class="e">6,156</text><text x="1409" y="429" class="r">6,156</text>
<text x="1482" y="454" class="e">19,694</text><text x="1409" y="454" class="r">19,694</text>
<text x="1482" y="479" class="e">19,694</text><text x="1409" y="479" class="r">19,694</text>
<text x="1482" y="504" class="e">19,494</text><text x="1409" y="504" class="r">19,494</text>
<text x="1482" y="529" class="e">15,298</text><text x="1409" y="529" class="r">15,298</text>
<text x="1482" y="558" class="e">16,416</text><text x="1409" y="558" class="r">16,416</text>
<text x="1482" y="587" class="e">200</text><text x="1409" y="587" class="r">200</text>
<text x="1481" y="628" class="e">-</text><text x="1408" y="628" class="r">-</text>
<text x="1482" y="676" class="e">3,000</text><text x="1409" y="676" class="r">3,000</text>
<text x="1482" y="720" class="e">1,000</text><text x="1409" y="720" class="r">1,000</text>
<text x="1482" y="763" class="e">68,400</text><text x="1409" y="763" class="r">68,400</text>
<text x="1482" y="805" class="e">250</text><text x="1409" y="805" class="r">250</text>
<text x="1482" y="852" class="e">250</text><text x="1409" y="852" class="r">250</text>
<text x="1482" y="895" class="e">42,465</text><text x="1409" y="895" class="r">42,465</text>
<text x="1482" y="939" class="e">57,000</text><text x="1409" y="939" class="r">57,000</text>
<text x="1482" y="983" class="e">2,000</text><text x="1409" y="983" class="r">2,000</text>

<!-- other columns -->
<text x="1000" y="354" class="r">20,000</text>
<text x="1000" y="379" class="r">38,105</text>
<text x="1104" y="404" class="e">5,848</text>
<text x="721" y="429" class="e">5,848</text>
<text x="911" y="454" class="e">19,694</text>
<text x="911" y="479" class="e">19,694</text>
<text x="721" y="504" class="e">19,494</text>
<text x="911" y="529" class="e">14,546</text>
<text x="911" y="558" class="e">16,416</text>
<text x="459" y="587" class="r">200</text>
<text x="1105" y="587" class="e">200</text>
<text x="378" y="676" class="e">3,000</text>
<text x="1000" y="676" class="r">3,000</text>
<text x="1000" y="720" class="r">1,000</text>
<text x="1000" y="763" class="r">68,400</text>
<text x="1335.500" y="763" class="e">68,400</text>
<text x="205.500" y="805" class="e">250</text>
<text x="1000" y="805" class="r">250</text>
<text x="205.500" y="852" class="e">250</text>
<text x="1000" y="852" class="r">250</text>
<text x="1335.500" y="939" class="e">57,000</text>
<text x="1000" y="983" class="r">2,000</text>

<!-- row numbers -->
<text x="1907" y="293" class="rh">1</text><text x="1907" y="322" class="rh">2</text><text x="1907" y="354" class="rh" style="fill:#217346">3</text><text x="1907" y="379" class="rh">4</text><text x="1907" y="404" class="rh">5</text><text x="1907" y="429" class="rh">6</text><text x="1907" y="454" class="rh">7</text><text x="1907" y="479" class="rh">8</text><text x="1907" y="504" class="rh">9</text><text x="1907" y="529" class="rh">10</text><text x="1907" y="558" class="rh">11</text><text x="1907" y="587" class="rh">12</text><text x="1907" y="629" class="rh">13</text><text x="1907" y="676" class="rh">14</text><text x="1907" y="720" class="rh">15</text><text x="1907" y="763" class="rh">16</text><text x="1907" y="805" class="rh">17</text><text x="1907" y="852" class="rh">18</text><text x="1907" y="895" class="rh">19</text><text x="1907" y="939" class="rh">20</text><text x="1907" y="983" class="rh">21</text>

<!-- selection -->
<rect x="1417.500" y="326.500" width="73" height="33" fill="none" stroke="#217346" stroke-width="2"/>
<rect x="1415" y="357" width="5" height="5" fill="#217346" stroke="#fff" stroke-width=".6"/>
<path d="M1891.500 326V360" stroke="#217346" stroke-width="2"/>
</g>

<!-- tabs bar -->
<rect x="0" y="978" width="1919" height="32" fill="#f0f0f0"/>
<path d="M22 978.500H1919" stroke="#dcdcdc"/>
<path d="M30 989l-6 4.500 6 4.500z" fill="#777"/>
<rect x="479" y="989" width="211" height="9" rx="4.500" fill="#6e6e6e"/>
<path d="M696 989l6 4.500-6 4.500z" fill="#777"/>
<circle cx="723" cy="989" r="1" fill="#444"/><circle cx="723" cy="994" r="1" fill="#444"/><circle cx="723" cy="999" r="1" fill="#444"/>
<path d="M956 993h11M961.500 988v11" stroke="#444"/>
<g stroke="#d0d0d0"><path d="M1009.500 982v24M1135.500 982v24M1227.500 982v24M1326.500 982v24M1433.500 982v24M1527.500 982v24M1623.500 982v24M1718.500 982v24"/></g>
<rect x="1014" y="982" width="117" height="24" rx="4" fill="#000"/>
<text x="1073" y="999" class="tab" textLength="100" lengthAdjust="spacingAndGlyphs">الميزانية العمومية</text>
<rect x="1140" y="982" width="83" height="24" rx="4" fill="#c00000"/>
<text x="1182" y="999" class="tab" textLength="66" lengthAdjust="spacingAndGlyphs">قائمة الدخل</text>
<rect x="1232" y="982" width="89" height="24" rx="4" fill="#0033f0"/>
<text x="1277" y="999" class="tab" textLength="71" lengthAdjust="spacingAndGlyphs">كارت الصنف</text>
<rect x="1330" y="982" width="98" height="24" rx="4" fill="#7030a0"/>
<text x="1380" y="999" class="tab" textLength="81" lengthAdjust="spacingAndGlyphs">ميزان المراجعة</text>
<rect x="1437" y="982" width="86" height="24" rx="4" fill="#c55a11"/>
<text x="1480" y="999" class="tab" textLength="71" lengthAdjust="spacingAndGlyphs">الاستاذ العام</text>
<rect x="1532" y="982" width="87" height="24" rx="4" fill="#3fa6de"/>
<text x="1576" y="999" class="tab" style="fill:#111" textLength="69" lengthAdjust="spacingAndGlyphs">شهر ديسمبر</text>
<rect x="1628" y="980" width="86" height="26" rx="3" fill="#f6f6f6"/>
<text x="1668" y="997" class="tab" style="fill:#111" textLength="65" lengthAdjust="spacingAndGlyphs">شهر نوفمبر</text>
<rect x="1635" y="1000" width="70" height="3" fill="#1f7a45"/>
<rect x="1722" y="982" width="80" height="24" rx="4" fill="#ffff00"/>
<text x="1762" y="999" class="tab" style="fill:#111" textLength="60" lengthAdjust="spacingAndGlyphs">شهر اكتوبر</text>
<path d="M1858 988l-5 5.500 5 5.500" fill="none" stroke="#aaa" stroke-width="1.200"/>
<path d="M1886 988l5 5.500-5 5.500" fill="none" stroke="#aaa" stroke-width="1.200"/>

<!-- status bar -->
<text x="12" y="1025" style="font-size:11.500px">Ready</text>
<circle cx="69" cy="1015" r="2.500" class="ic"/><path d="M63 1019h12M69 1019v3M69 1022l-5 6M69 1022l5 6" class="ic"/>
<text x="80" y="1025" style="font-size:11px;font-weight:bold;fill:#333" textLength="126" lengthAdjust="spacingAndGlyphs">Accessibility: Investigate</text>
<rect x="1620" y="1011" width="40" height="19" fill="#dcdcdc"/>
<g>
<path d="M1633 1015h13v13h-13zM1633 1019.500h13M1633 1024h13M1637.500 1015v13M1642 1015v13" fill="none" stroke="#333"/>
<path d="M1674 1015h13v13h-13zM1677 1019h7M1677 1022h7M1677 1025h7" fill="none" stroke="#333"/>
<path d="M1714 1015h13v13h-13zM1718 1015v7h5v-7" fill="none" stroke="#333"/>
</g>
<path d="M1745 1020.500h8M1863 1020.500h8M1867 1016.500v8" stroke="#333"/>
<path d="M1759 1020.500h99" stroke="#888"/>
<rect x="1807" y="1014" width="4" height="13" fill="#555"/>
<text x="1885" y="1025" style="font-size:11.500px">100%</text>

<!-- watermark -->
<g opacity=".11">
<text x="959" y="966" textLength="208" lengthAdjust="spacingAndGlyphs" style="font-family:'DejaVu Sans',sans-serif;font-size:62px;font-weight:bold;fill:#000;stroke:#000;stroke-width:5px;text-anchor:middle">نفذلي</text>
<circle cx="877" cy="987" r="7" fill="#000"/><circle cx="891" cy="988" r="7" fill="#000"/>
<text x="960" y="1021" style="font-size:32px;font-weight:bold;fill:#000;text-anchor:middle;letter-spacing:2px" textLength="195">nafezly.com</text>
</g>
</svg>
</body></html>
